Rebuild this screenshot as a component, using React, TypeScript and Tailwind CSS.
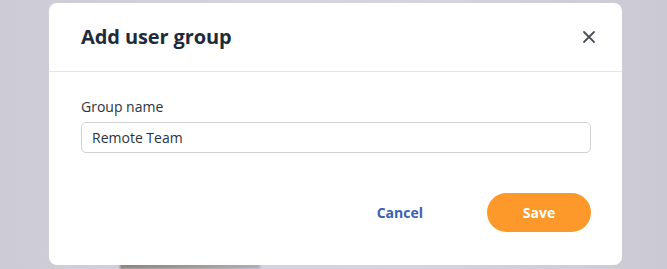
import React from "react";

export default function App() {
  return (
    <div
      className="relative h-[269px] w-[667px] overflow-hidden bg-[linear-gradient(90deg,#cdcbd5_0%,#d3d1db_30%,#d6d4de_60%,#cbc9d3_100%)]"
      style={{ fontFamily: '"Open Sans", "Noto Sans", sans-serif' }}
    >
      <div className="absolute bottom-0 left-[120px] h-[6px] w-[140px] bg-[linear-gradient(90deg,#8a8580,#a09890,#b0aeb8)] blur-[1px]" />
      <div className="relative ml-[49px] mt-[3px] flex h-[262px] w-[573px] flex-col rounded-[8px] bg-white">
        <div className="flex h-[69px] items-center justify-between border-b border-[#e6e6e9] pl-[32px] pr-[26px]">
          <h2 className="text-[20px] font-bold tracking-[-0.1px] text-[#1e2b3a]">Add user group</h2>
          <svg width="14" height="14" viewBox="0 0 14 14" className="text-[#4a4f57]">
            <path d="M2 2 L12 12 M12 2 L2 12" stroke="currentColor" strokeWidth="1.8" strokeLinecap="round" />
          </svg>
        </div>
        <div className="px-[32px] pt-[25px]">
          <label className="block text-[14px] leading-[19px] text-[#2a3340]">Group name</label>
          <div className="mt-[6px] flex h-[31px] w-[510px] items-center rounded-[5px] border border-[#cfd1d5] px-[10px] text-[14px] text-[#2a3340]">
            Remote Team
          </div>
        </div>
        <div className="mt-[40px] flex items-center justify-end pr-[31px]">
          <button className="mr-[64px] text-[14px] font-bold text-[#3a62b3]">Cancel</button>
          <button className="h-[39px] w-[104px] rounded-full bg-[#fd982b] text-[14px] font-bold text-white">Save</button>
        </div>
      </div>
    </div>
  );
}
